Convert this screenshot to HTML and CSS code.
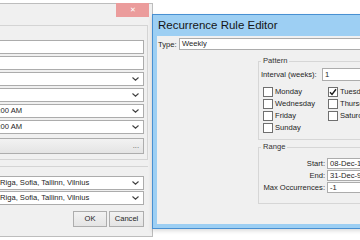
FILE: index.html
```html
<!DOCTYPE html>
<html lang="en">
<head>
  <meta charset="UTF-8">
  <title>Recurrence Rule Editor</title>
  <link rel="stylesheet" href="styles.css">
</head>
<body>
  <div class="desk">
    <div class="win win-back">
      <div class="titlebar"><span class="close">&#x2715;</span></div>
      <div class="panel">
        <div class="field"></div>
        <div class="field"></div>
        <div class="field select"><span></span><svg class="chev" width="7" height="4" viewBox="0 0 7 4"><path d="M0.5 0.5 L3.5 3.2 L6.5 0.5" /></svg></div>
        <div class="field select"><span></span><svg class="chev" width="7" height="4" viewBox="0 0 7 4"><path d="M0.5 0.5 L3.5 3.2 L6.5 0.5" /></svg></div>
        <div class="field select time"><span>12:00 AM</span><svg class="chev" width="7" height="4" viewBox="0 0 7 4"><path d="M0.5 0.5 L3.5 3.2 L6.5 0.5" /></svg></div>
        <div class="field select time"><span>12:00 AM</span><svg class="chev" width="7" height="4" viewBox="0 0 7 4"><path d="M0.5 0.5 L3.5 3.2 L6.5 0.5" /></svg></div>
        <div class="btn btn-wide">...</div>
      </div>
      <div class="lower">
        <div class="field select"><span>(UTC+02:00) Helsinki, Kyiv, Riga, Sofia, Tallinn, Vilnius</span><svg class="chev" width="7" height="4" viewBox="0 0 7 4"><path d="M0.5 0.5 L3.5 3.2 L6.5 0.5" /></svg></div>
        <div class="field select"><span>(UTC+02:00) Helsinki, Kyiv, Riga, Sofia, Tallinn, Vilnius</span><svg class="chev" width="7" height="4" viewBox="0 0 7 4"><path d="M0.5 0.5 L3.5 3.2 L6.5 0.5" /></svg></div>
        <div class="actions">
          <div class="btn btn-ok">OK</div>
          <div class="btn btn-cancel">Cancel</div>
        </div>
      </div>
    </div>

    <div class="win win-front">
      <div class="caption">Recurrence Rule Editor</div>
      <div class="client">
        <div class="type-row">
          <span class="type-label">Type:</span>
          <div class="field">Weekly</div>
        </div>
        <div class="groups">
          <fieldset class="group">
            <legend>Pattern</legend>
            <div class="interval">
              <span class="interval-label">Interval (weeks):</span>
              <div class="field">1</div>
            </div>
            <div class="days">
              <span class="check"><span class="box"></span>Monday</span>
              <span class="check"><span class="box"><svg width="8" height="8" viewBox="0 0 8 8"><path d="M1 4.2 L3 6.4 L7 1.2" /></svg></span>Tuesday</span>
              <span class="check"><span class="box"></span>Wednesday</span>
              <span class="check"><span class="box"></span>Thursday</span>
              <span class="check"><span class="box"></span>Friday</span>
              <span class="check"><span class="box"></span>Saturday</span>
              <span class="check"><span class="box"></span>Sunday</span>
            </div>
          </fieldset>
          <fieldset class="group group-range">
            <legend>Range</legend>
            <div class="range">
              <span class="range-label">Start:</span>
              <div class="field">08-Dec-18 12:00 AM</div>
              <span class="range-label">End:</span>
              <div class="field">31-Dec-9999 12:00 AM</div>
              <span class="range-label">Max Occurrences:</span>
              <div class="field">-1</div>
            </div>
          </fieldset>
        </div>
      </div>
    </div>
  </div>
</body>
</html>
```

FILE: styles.css
```css
body {
  margin: 0;
  font-family: "Liberation Sans", Arial, sans-serif;
  font-size: 7.6px;
  color: #1e1e1e;
}

.desk {
  position: relative;
  width: 360px;
  height: 240px;
  overflow: hidden;
  background: #fff;
}

.win {
  position: absolute;
  box-sizing: border-box;
  display: flex;
  flex-direction: column;
}

/* back dialog */
.win-back {
  left: -120px;
  top: 3px;
  width: 273px;
  height: 234px;
  border: 1px solid #bdbdbd;
  background: #f0f0f0;
}

.titlebar {
  height: 21px;
  display: flex;
  justify-content: flex-end;
  align-items: flex-start;
  padding-right: 3px;
}

.close {
  width: 33px;
  height: 14px;
  margin-top: -1px;
  background: #eb9c9c;
  color: #fff;
  font-size: 7px;
  line-height: 14px;
  text-align: center;
}

.panel {
  margin-right: 4px;
  border: 1px solid #d4d4d4;
  padding: 14px 3px 5px 108px;
  display: flex;
  flex-direction: column;
  gap: 2px;
}

.field {
  box-sizing: border-box;
  height: 14px;
  border: 1px solid #acacac;
  background: #fff;
  padding-left: 2px;
  line-height: 12px;
  white-space: nowrap;
  overflow: hidden;
}

.select {
  display: flex;
  align-items: center;
}

.select span {
  flex: 1;
  overflow: hidden;
}

.time span {
  text-indent: -3px;
}

.chev {
  margin-right: 4px;
  fill: none;
  stroke: #404040;
  stroke-width: 1.1;
}

.btn {
  box-sizing: border-box;
  height: 16px;
  border: 1px solid #adadad;
  background: linear-gradient(#f2f2f2, #e4e4e4);
  line-height: 14px;
  text-align: center;
}

.btn-wide {
  margin-top: 2px;
  text-align: right;
  padding-right: 4px;
  color: #555;
}

.lower {
  margin: 6px 4px 0 0;
  border-top: 1px solid #d4d4d4;
  padding: 9px 4px 0 21px;
  display: flex;
  flex-direction: column;
  gap: 1px;
}

.actions {
  margin-top: 5px;
  display: flex;
  justify-content: flex-end;
  gap: 2px;
}

.btn-ok {
  width: 34px;
}

.btn-cancel {
  width: 35px;
}

/* recurrence editor */
.win-front {
  left: 152px;
  top: 14px;
  width: 260px;
  height: 215px;
  border: 1px solid #4890d2;
  background: #9dcff3;
  padding: 0 4px 4px;
  box-shadow: 0 2px 4px rgba(0, 0, 0, 0.14);
}

.caption {
  height: 21px;
  padding-left: 1px;
  font-size: 11.5px;
  line-height: 21px;
  color: #151515;
}

.client {
  flex: 1;
  background: #f0f0f0;
  padding: 2px 0 0 1px;
}

.type-row {
  display: flex;
  align-items: center;
}

.type-label {
  width: 21px;
}

.type-row .field {
  flex: 1;
  height: 12px;
  line-height: 10px;
}

.groups {
  margin: 6px 0 0 100px;
}

.group {
  margin: 0;
  min-width: 0;
  border: 1px solid #d6d6d6;
  padding: 2px 0 4px 2px;
}

.group legend {
  padding: 0 2px;
  line-height: 10px;
  color: #333;
}

.interval {
  display: flex;
  align-items: center;
  gap: 2px;
}

.interval-label {
  width: 59px;
}

.interval .field {
  flex: 1;
  height: 13px;
  line-height: 11px;
}

.days {
  margin: 6px 0 0 2px;
  display: grid;
  grid-template-columns: 65px 1fr;
  grid-auto-rows: 12px;
}

.check {
  display: flex;
  align-items: flex-start;
  gap: 2px;
  line-height: 10px;
  white-space: nowrap;
}

.box {
  box-sizing: border-box;
  width: 10px;
  height: 10px;
  border: 1px solid #6f6f6f;
  background: #fff;
  display: flex;
  align-items: center;
  justify-content: center;
}

.box path {
  fill: none;
  stroke: #1a1a1a;
  stroke-width: 1.4;
}

.group-range {
  margin-top: 2px;
  padding: 6px 0 10px 2px;
}

.range {
  display: grid;
  grid-template-columns: 64px 1fr;
  column-gap: 2px;
  row-gap: 1px;
}

.range-label {
  text-align: right;
  line-height: 11px;
  white-space: nowrap;
}

.range .field {
  height: 11px;
  line-height: 9px;
}
```
